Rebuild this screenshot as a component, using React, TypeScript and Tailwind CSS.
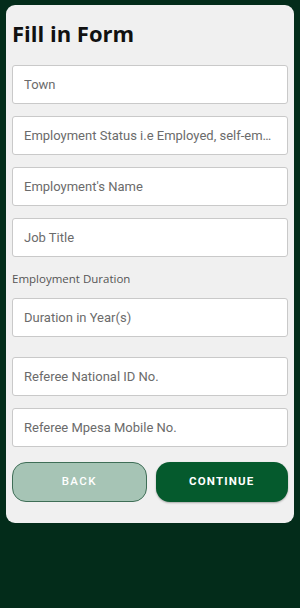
import { useState } from "react";

const fields = [
  "Town",
  "Employment Status i.e Employed, self-employed",
  "Employment's Name",
  "Job Title",
];

const referee = ["Referee National ID No.", "Referee Mpesa Mobile No."];

function Field({ placeholder }: { placeholder: string }) {
  const [value, setValue] = useState("");
  return (
    <input
      value={value}
      onChange={(e) => setValue(e.target.value)}
      placeholder={placeholder}
      className="h-[39px] w-full truncate rounded-[3px] border border-[#c9c9c9] bg-white px-[11px] text-[13px] text-[#333] outline-none placeholder:text-[#6b6b6b] [font-family:Roboto,sans-serif]"
    />
  );
}

export default function App() {
  return (
    <div className="min-h-[608px] w-[300px] bg-[#032c1a] px-[6px] pt-[5px]">
      <div className="rounded-[9px] bg-[#f0f0f0] px-[6px] pb-[21px] pt-[14px]">
        <h1 className="text-[22px] font-bold leading-[28px] text-[#111] [font-family:'Open_Sans',sans-serif]">
          Fill in Form
        </h1>

        <div className="mt-[18px] flex flex-col gap-[12px]">
          {fields.map((f) => (
            <Field key={f} placeholder={f} />
          ))}
        </div>

        <div className="mt-[14px] text-[11.5px] leading-[16px] text-[#555] [font-family:'Open_Sans',sans-serif]">
          Employment Duration
        </div>
        <div className="mt-[11px]">
          <Field placeholder="Duration in Year(s)" />
        </div>

        <div className="mt-[20px] flex flex-col gap-[12px]">
          {referee.map((f) => (
            <Field key={f} placeholder={f} />
          ))}
        </div>

        <div className="mt-[15px] flex gap-[9px]">
          <button
            type="button"
            className="h-[40px] flex-1 rounded-[14px] border border-[#3f6e57] bg-[#a6c4b5] text-[11.5px] font-medium tracking-[0.12em] text-white [font-family:Roboto,sans-serif]"
          >
            BACK
          </button>
          <button
            type="button"
            className="h-[40px] flex-1 rounded-[14px] bg-[#055a2d] text-[11.5px] font-bold tracking-[0.1em] text-white shadow-[0_1px_2px_rgba(0,0,0,0.3)] [font-family:Roboto,sans-serif]"
          >
            CONTINUE
          </button>
        </div>
      </div>
    </div>
  );
}
